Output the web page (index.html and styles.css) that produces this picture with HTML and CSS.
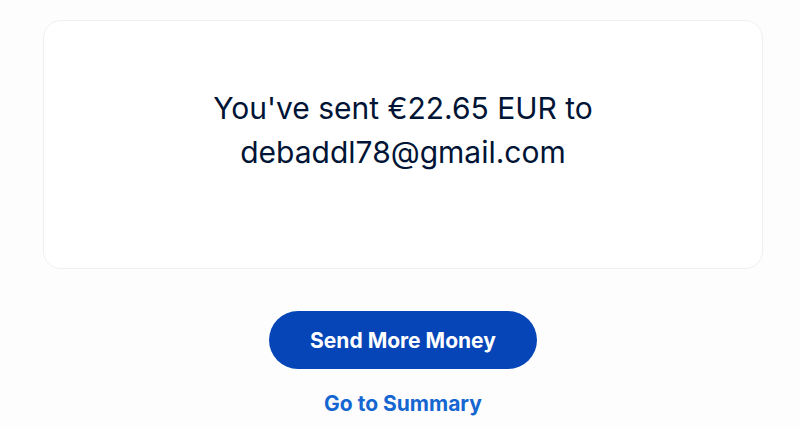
FILE: index.html
```html
<!DOCTYPE html>
<html lang="en">
<head>
<meta charset="utf-8">
<title>Sent</title>
<link rel="stylesheet" href="styles.css">
</head>
<body>
<main class="page">
  <section class="card">
    <p class="message">You've sent €22.65 EUR to debaddl78@gmail.com</p>
  </section>
  <div class="actions">
    <button class="primary" type="button">Send More Money</button>
    <a class="link" href="#">Go to Summary</a>
  </div>
</main>
</body>
</html>
```
FILE: styles.css
```css
* { box-sizing: border-box; }
html, body { margin: 0; padding: 0; }
body {
  background: #fdfdfd;
  font-family: Inter, "Noto Sans", "Liberation Sans", sans-serif;
  width: 800px;
  height: 429px;
  overflow: hidden;
}
.page {
  padding: 20px 0 0 43px;
  width: 763px;
}
.card {
  width: 720px;
  height: 249px;
  background: #ffffff;
  border: 1px solid #efefef;
  border-radius: 18px;
  display: flex;
  justify-content: center;
  padding-top: 65px;
}
.message {
  margin: 0;
  width: 420px;
  text-align: center;
  font-size: 30px;
  line-height: 44px;
  color: #001435;
  font-weight: 400;
}
.actions {
  display: flex;
  flex-direction: column;
  align-items: center;
  padding-top: 42px;
}
.primary {
  width: 268px;
  height: 58px;
  border: none;
  border-radius: 29px;
  background: #0545b7;
  color: #ffffff;
  font-family: inherit;
  font-size: 21px;
  font-weight: 700;
}
.link {
  margin-top: 22px;
  color: #1566d1;
  text-decoration: none;
  font-size: 21px;
  font-weight: 700;
}
```
